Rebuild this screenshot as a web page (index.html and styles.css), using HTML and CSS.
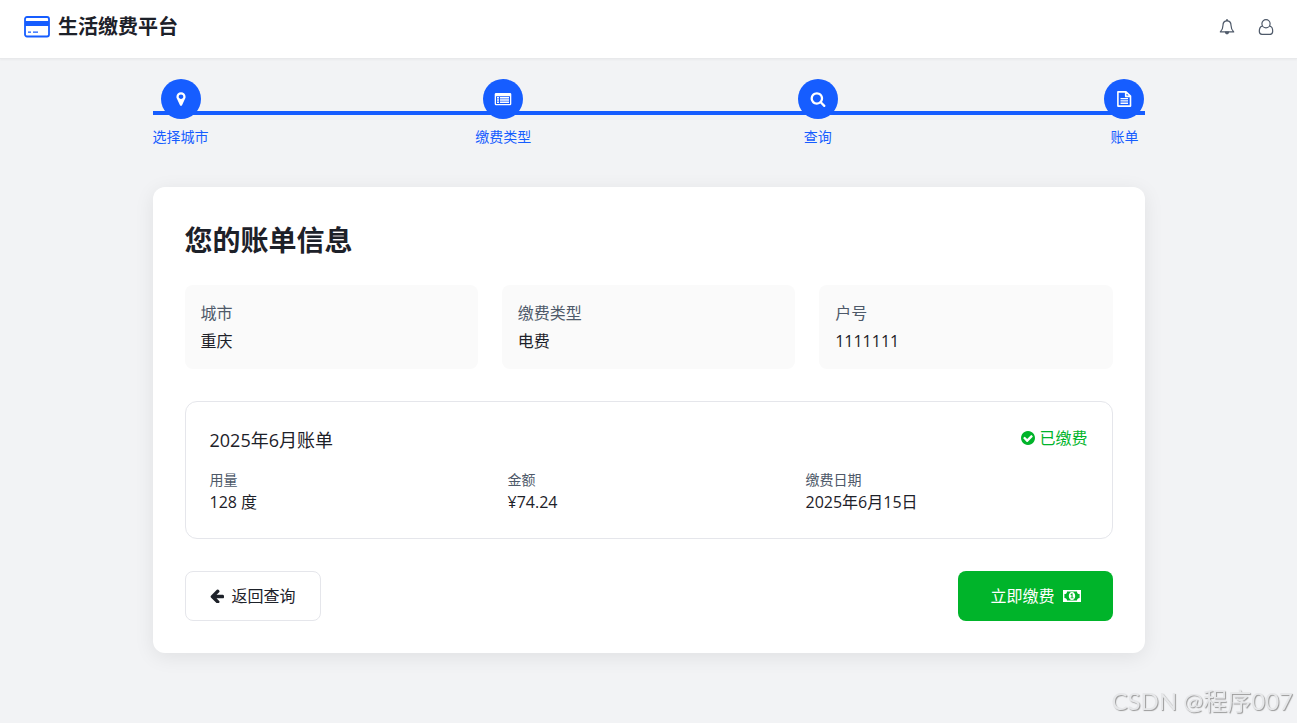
FILE: index.html
```
<!DOCTYPE html>
<html lang="zh-CN">
<head>
    <meta charset="UTF-8">
    <meta name="viewport" content="width=device-width, initial-scale=1.0">
    <title>生活缴费平台</title>
    <link rel="stylesheet" href="styles.css">
</head>
<body>
    <!-- 顶部导航 -->
    <header class="header">
        <div class="brand">
            <svg class="brand-icon" viewBox="0 0 26 22" aria-hidden="true">
                <rect x="1" y="1" width="24" height="19.500" rx="2" fill="none" stroke="currentColor" stroke-width="1.800"/>
                <path d="M1 5h24v5H1zM4 15.500h3v1.300H4zM9 15.500h5v1.300H9z" fill="currentColor"/>
            </svg>
            <h1>生活缴费平台</h1>
        </div>
        <div class="header-actions">
            <button class="icon-button" aria-label="通知">
                <svg viewBox="0 0 16 16" fill="none" stroke="currentColor" stroke-width="1.200" stroke-linejoin="round" aria-hidden="true">
                    <path d="M8 1.900C5.500 1.900 4 3.900 4 6.200C4 9.600 3 11.200 1.300 12.900H14.700C13 11.200 12 9.600 12 6.200C12 3.900 10.500 1.900 8 1.900Z"/>
                    <path d="M8 .3V2" stroke-width="1.800"/>
                    <path d="M6.500 13.200C6.700 15.300 9.300 15.300 9.500 13.200Z" fill="currentColor"/>
                </svg>
            </button>
            <button class="icon-button" aria-label="用户">
                <svg viewBox="0 0 16 16" fill="none" stroke="currentColor" stroke-width="1.200" aria-hidden="true">
                    <circle cx="8" cy="4.800" r="4.100"/>
                    <path d="M4.600 7.200C2 7.200 1.300 10 1.300 12.300C1.300 14.200 2.500 15.300 4 15.300H12C13.500 15.300 14.700 14.200 14.700 12.300C14.700 10 14 7.200 11.400 7.200"/>
                </svg>
            </button>
        </div>
    </header>

    <main class="container">
        <!-- 步骤 -->
        <ol class="steps">
            <li class="step">
                <span class="step-icon">
                    <svg class="icon" viewBox="0 0 1792 1792" aria-hidden="true"><path d="M1152 640q0-106-75-181t-181-75-181 75-75 181 75 181 181 75 181-75 75-181zm256 0q0 109-33 179l-364 774q-16 33-47.5 52t-67.5 19-67.5-19-46.5-52l-365-774q-33-70-33-179 0-212 150-362t362-150 362 150 150 362z"/></svg>
                </span>
                <span class="step-label">选择城市</span>
            </li>
            <li class="step">
                <span class="step-icon">
                    <svg class="icon icon-wide" viewBox="0 0 18 16" aria-hidden="true">
                        <path fill-rule="evenodd" d="M2 2H16Q17.300 2 17.300 3.300V12.900Q17.300 14.200 16 14.200H2Q.7 14.200 .7 12.900V3.300Q.7 2 2 2ZM2 5.200V12.900H16V5.200Z"/>
                        <path d="M3 6h2v1.400H3zM6 6h9v1.400H6zM3 8.300h2v1.400H3zM6 8.300h9v1.400H6zM3 10.600h2v1.400H3zM6 10.600h9v1.400H6z"/>
                    </svg>
                </span>
                <span class="step-label">缴费类型</span>
            </li>
            <li class="step">
                <span class="step-icon">
                    <svg class="icon" viewBox="0 0 1792 1792" aria-hidden="true"><path d="M1216 832q0-185-131.5-316.5t-316.5-131.5-316.5 131.5-131.5 316.5 131.5 316.5 316.5 131.5 316.5-131.5 131.5-316.5zm512 832q0 52-38 90t-90 38q-54 0-90-38l-343-342q-179 124-399 124-143 0-273.5-55.5t-225-150-150-225-55.5-273.5 55.5-273.5 150-225 225-150 273.5-55.5 273.5 55.5 225 150 150 225 55.5 273.5q0 220-124 399l343 343q37 37 37 90z"/></svg>
                </span>
                <span class="step-label">查询</span>
            </li>
            <li class="step">
                <span class="step-icon">
                    <svg class="icon" viewBox="0 0 16 16" aria-hidden="true">
                        <path d="M1.900.9H10L14.500 5.200V15.100H1.900ZM9.700.9V5.400H14.500" fill="none" stroke="currentColor" stroke-width="1.600" stroke-linejoin="round"/>
                        <path d="M4.500 7h7.500v1.300H4.500zM4.500 9.300h7.500v1.300H4.500zM4.500 11.600h7.500v1.300H4.500z"/>
                    </svg>
                </span>
                <span class="step-label">账单</span>
            </li>
        </ol>

        <!-- 账单信息 -->
        <section class="card">
            <h2>您的账单信息</h2>

            <dl class="info-grid">
                <div class="info-box">
                    <dt>城市</dt>
                    <dd>重庆</dd>
                </div>
                <div class="info-box">
                    <dt>缴费类型</dt>
                    <dd>电费</dd>
                </div>
                <div class="info-box">
                    <dt>户号</dt>
                    <dd>1111111</dd>
                </div>
            </dl>

            <div class="bill">
                <div class="bill-header">
                    <h3>2025年6月账单</h3>
                    <span class="bill-status">
                        <svg class="icon icon-small" viewBox="128 128 1536 1536" aria-hidden="true"><path d="M1412 734q0-28-18-46l-91-90q-19-19-45-19t-45 19l-408 407-226-226q-19-19-45-19t-45 19l-91 90q-18 18-18 46 0 27 18 45l362 362q19 19 45 19 27 0 46-19l543-543q18-18 18-45zm252 162q0 209-103 385.5t-279.5 279.5-385.5 103-385.5-103-279.5-279.5-103-385.5 103-385.5 279.5-279.5 385.5-103 385.5 103 279.5 279.5 103 385.5z"/></svg>
                        已缴费
                    </span>
                </div>
                <dl class="bill-grid">
                    <div>
                        <dt>用量</dt>
                        <dd>128 度</dd>
                    </div>
                    <div>
                        <dt>金额</dt>
                        <dd>¥74.24</dd>
                    </div>
                    <div>
                        <dt>缴费日期</dt>
                        <dd>2025年6月15日</dd>
                    </div>
                </dl>
            </div>

            <div class="actions">
                <button class="button button-back">
                    <svg class="icon icon-small" viewBox="128 128 1536 1536" aria-hidden="true"><path d="M1664 896v128q0 53-32.500 90.500t-84.500 37.500h-704l293 294q38 36 38 90t-38 90l-75 76q-37 37-90 37-52 0-91-37l-651-652q-37-37-37-90 0-52 37-91l651-650q38-38 91-38 52 0 90 38l75 74q38 38 38 91t-38 91l-293 293h704q52 0 84.500 37.500t32.500 90.500z"/></svg>
                    返回查询
                </button>
                <button class="button button-pay">
                    立即缴费
                    <svg class="icon icon-wide" viewBox="0 0 18 16" aria-hidden="true">
                        <path fill-rule="evenodd" d="M0 2H18V14H0ZM4 3.500A2.600 2.600 0 0 1 1.400 6.100V9.900A2.600 2.600 0 0 1 4 12.500H14A2.600 2.600 0 0 1 16.600 9.900V6.100A2.600 2.600 0 0 1 14 3.500Z"/>
                        <path fill-rule="evenodd" d="M9 4C11 4 12.200 5.700 12.200 8S11 12 9 12S5.800 10.300 5.800 8S7 4 9 4ZM8.500 5.600L7.300 6.700L7.900 7.300L8.500 6.900V9.500H7.500V10.300H10.600V9.500H9.600V5.600Z"/>
                    </svg>
                </button>
            </div>
        </section>
    </main>

    <div class="watermark">CSDN @程序007</div>
</body>
</html>
```
FILE: styles.css
```
* {
    box-sizing: border-box;
    margin: 0;
    padding: 0;
}
body {
    font-family: "Open Sans", "Noto Sans CJK SC", sans-serif;
    font-size: 16px;
    line-height: 24px;
    background: #f2f3f5;
    color: #1d2129;
}
button {
    font: inherit;
    cursor: pointer;
}

/* 顶部导航 */
.header {
    display: flex;
    justify-content: space-between;
    align-items: center;
    padding: 13px 23px 17px 24px;
    background: #fff;
    border-bottom: 1px solid #e8e9eb;
    box-shadow: 0 1px 2px rgba(0, 0, 0, 0.04);
}
.brand {
    display: flex;
    align-items: center;
    gap: 8px;
}
.brand-icon {
    width: 26px;
    height: 22px;
    color: #165dff;
}
.brand h1 {
    font-size: 20px;
    line-height: 28px;
}
.header-actions {
    display: flex;
    gap: 23px;
}
.icon-button {
    display: flex;
    border: none;
    background: none;
    color: #4e5969;
}
.icon-button svg {
    width: 16px;
    height: 16px;
}

.container {
    max-width: 1024px;
    margin: 0 auto;
    padding: 20px 16px;
}
.icon {
    width: 16px;
    height: 16px;
    fill: currentColor;
}
.icon-wide {
    width: 18px;
}
.icon-small {
    width: 14px;
    height: 14px;
}

/* 步骤条 */
.steps {
    position: relative;
    display: flex;
    justify-content: space-between;
    margin-bottom: 40px;
    list-style: none;
}
.steps::before {
    content: "";
    position: absolute;
    top: 32px;
    left: 0;
    right: 0;
    height: 4px;
    background: #165dff;
}
.step {
    position: relative;
    display: flex;
    flex-direction: column;
    align-items: center;
    gap: 8px;
}
.step-icon {
    display: flex;
    justify-content: center;
    align-items: center;
    width: 40px;
    height: 40px;
    border-radius: 50%;
    background: #165dff;
    color: #fff;
}
.step-label {
    font-size: 14px;
    line-height: 20px;
    color: #165dff;
}

/* 账单卡片 */
.card {
    padding: 32px;
    background: #fff;
    border-radius: 12px;
    box-shadow: 0 4px 20px rgba(0, 0, 0, 0.08);
}
.card h2 {
    margin-bottom: 24px;
    font-size: 28px;
    line-height: 42px;
}
.info-grid {
    display: grid;
    grid-template-columns: repeat(3, 1fr);
    gap: 24px;
    margin-bottom: 32px;
}
.info-box {
    padding: 16px;
    background: #fafafa;
    border-radius: 8px;
}
.info-box dt {
    margin-bottom: 4px;
    color: #4e5969;
}
.bill {
    margin-bottom: 32px;
    padding: 24px;
    border: 1px solid #e5e6eb;
    border-radius: 12px;
}
.bill-header {
    display: flex;
    justify-content: space-between;
    align-items: flex-start;
    margin-bottom: 16px;
}
.bill-header h3 {
    font-size: 18px;
    font-weight: normal;
    line-height: 28px;
}
.bill-status {
    display: flex;
    align-items: center;
    gap: 4px;
    color: #00b42a;
}
.bill-grid {
    display: grid;
    grid-template-columns: repeat(3, 1fr);
    gap: 16px;
}
.bill-grid dt {
    font-size: 14px;
    line-height: 20px;
    color: #4e5969;
}

.actions {
    display: flex;
    justify-content: space-between;
}
.button {
    display: flex;
    align-items: center;
    gap: 8px;
    border-radius: 8px;
}
.button-back {
    padding: 12px 24px;
    border: 1px solid #e5e6eb;
    background: #fff;
    color: #1d2129;
}
.button-pay {
    padding: 13px 32px;
    border: none;
    background: #00b42a;
    color: #fff;
}

.watermark {
    position: fixed;
    right: 4px;
    bottom: 6px;
    font-family: Lato, "Noto Sans CJK SC", sans-serif;
    font-size: 24px;
    line-height: 32px;
    color: #e6e7e9;
    text-shadow: 1px 1px 1px #999;
}
```
